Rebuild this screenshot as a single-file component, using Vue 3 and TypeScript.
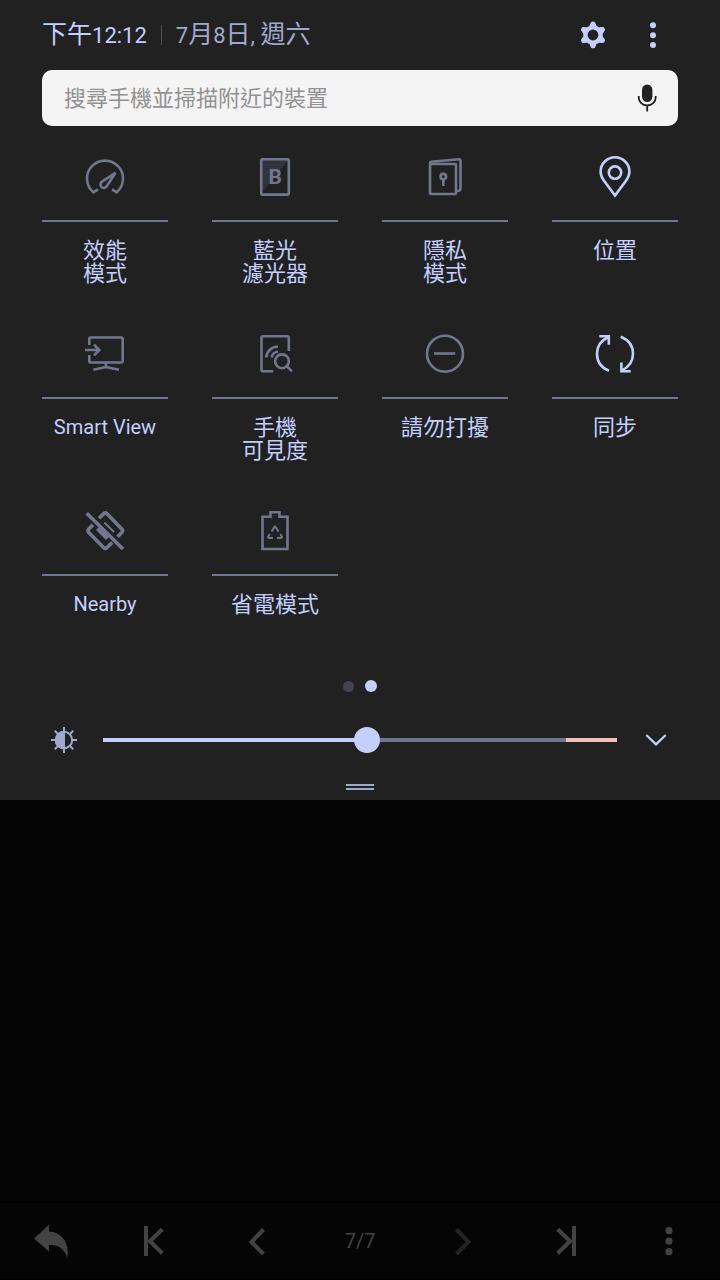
<script setup lang="ts">
import { computed, ref } from 'vue'

interface Tile {
  id: string
  lines: string[]
  on: boolean
  latin?: boolean
}

const tiles = ref<Tile[]>([
  { id: 'performance', lines: ['效能', '模式'], on: false },
  { id: 'bluelight', lines: ['藍光', '濾光器'], on: false },
  { id: 'secure', lines: ['隱私', '模式'], on: false },
  { id: 'location', lines: ['位置'], on: true },
  { id: 'smartview', lines: ['Smart View'], on: false, latin: true },
  { id: 'visibility', lines: ['手機', '可見度'], on: false },
  { id: 'dnd', lines: ['請勿打擾'], on: false },
  { id: 'sync', lines: ['同步'], on: true },
  { id: 'nearby', lines: ['Nearby'], on: false, latin: true },
  { id: 'battery', lines: ['省電模式'], on: false },
])

const maxBrightness = 255
const query = ref('')
const brightness = ref(131)
const trackStyle = computed(() => ({ '--fill': `${(brightness.value / maxBrightness) * 100}%` }))
</script>

<template>
  <div class="screen">
    <section class="panel">
      <header class="header">
        <time class="clock">下午<span class="num">12:12</span></time>
        <span class="divider"></span>
        <span class="date"><span class="num">7</span>月<span class="num">8</span>日<span class="num">, </span>週六</span>
        <div class="actions">
          <button type="button" class="action" aria-label="設定">
            <svg width="28" height="28" viewBox="0 0 28 28">
              <g fill="currentColor">
                <g v-for="a in [0, 60, 120, 180, 240, 300]" :key="a" :transform="`rotate(${a} 14 14)`">
                  <path d="M8.2 7.6Q10.6 6 11.3 2.8Q11.8 .6 14 .6T16.7 2.8Q17.4 6 19.8 7.6Z" />
                </g>
              </g>
              <circle cx="14" cy="14" r="7.6" fill="none" stroke="currentColor" stroke-width="4.4" />
            </svg>
          </button>
          <button type="button" class="action" aria-label="更多選項">
            <svg width="8" height="28" viewBox="0 0 8 28" fill="currentColor">
              <circle cx="4" cy="4.3" r="3" /><circle cx="4" cy="14.2" r="3" /><circle cx="4" cy="24" r="3" />
            </svg>
          </button>
        </div>
      </header>

      <form class="search" @submit.prevent>
        <input v-model="query" type="text" placeholder="搜尋手機並掃描附近的裝置" aria-label="搜尋手機並掃描附近的裝置" />
        <button type="button" class="mic" aria-label="語音搜尋">
          <svg width="20" height="28" viewBox="0 0 20 28">
            <rect x="5" y="0.5" width="10.4" height="17.5" rx="5.2" fill="currentColor" />
            <path d="M1.7 12v1.5a8.5 8 0 0 0 17 0V12M10.2 21.5V27.5" fill="none" stroke="currentColor" stroke-width="1.8" />
          </svg>
        </button>
      </form>

      <div class="tiles">
        <button v-for="tile in tiles" :key="tile.id" type="button" class="tile" :aria-pressed="tile.on" @click="tile.on = !tile.on">
          <svg class="glyph" :class="{ on: tile.on }" width="48" height="48" viewBox="0 0 48 48">
            <g v-if="tile.id === 'performance'">
              <path d="M17 36.3L12.3 39.3A18 18 0 1 1 35.7 39.3L31 36.3" />
              <path d="M34.5 19.8L21 28.7A3.4 3.4 0 1 0 26 32.8Z" />
            </g>
            <g v-else-if="tile.id === 'bluelight'">
              <path class="shade" d="M10 6H38L10 41Z" />
              <rect x="10.2" y="6.2" width="27.6" height="35.4" rx="1.5" />
              <text x="24.3" y="31" text-anchor="middle">B</text>
            </g>
            <g v-else-if="tile.id === 'secure'">
              <rect x="9" y="11" width="26" height="30" rx="1" />
              <path d="M9 11V10Q9 9 10.4 8.8L37.8 6.2Q39.5 6 39.5 7.6V35.5Q39.5 37.2 38 37.6L35 38" />
              <circle cx="22.3" cy="23.5" r="2.8" />
              <path d="M22.3 26.5V33" />
            </g>
            <g v-else-if="tile.id === 'location'">
              <path d="M24 42.5L13 27.7C10.8 24.6 9.6 22 9.6 18.7A14.4 14.4 0 0 1 38.4 18.7C38.4 22 37.2 24.6 35 27.7Z" />
              <circle cx="24" cy="19.6" r="6.2" />
            </g>
            <g v-else-if="tile.id === 'smartview'">
              <path d="M8.3 15V9Q8.3 7.5 9.8 7.5H40.2Q41.7 7.5 41.7 9V31Q41.7 32.5 40.2 32.5H9.8Q8.3 32.5 8.3 31V25" />
              <path d="M4 20H18M13 14.7L18.3 20L13 25.3M25 33V36.5M12.3 39.7L25 37L38 39.7" />
            </g>
            <g v-else-if="tile.id === 'visibility'">
              <path d="M22.3 41.2H12Q10.5 41.2 10.5 39.7V7.8Q10.5 6.3 12 6.3H36.3Q37.8 6.3 37.8 7.8V21" />
              <circle cx="31" cy="31.3" r="6.9" />
              <path d="M36 36.3L41 41.3M15.2 27.5A12 12 0 0 1 27 16.5M20.7 27.5A6.5 6.5 0 0 1 27 21.7" />
            </g>
            <g v-else-if="tile.id === 'dnd'">
              <circle cx="24" cy="23.7" r="18" /><path d="M13 23.5H34.2" />
            </g>
            <g v-else-if="tile.id === 'sync'">
              <path d="M18 40.7C10 37.5 6 31 6 23.7C6 17 10 10.5 17.5 7" />
              <path d="M8.3 6.2H17.8V14.8" />
              <path d="M29.7 6.8C37.8 10 42 16.5 42 23.7C42 30.5 38 37 30.5 40.6" />
              <path d="M39.7 41.2H30.4V32.5" />
            </g>
            <g v-else-if="tile.id === 'nearby'" class="thick">
              <path d="M18 11.2L22.8 6.6Q24.3 5.2 25.8 6.6L41 22.2Q42.3 23.7 41 25.2L36.5 29.7" />
              <path d="M11.9 17.7L7.6 22.2Q6.3 23.7 7.6 25.2L22.8 40.8Q24.3 42.2 25.8 40.8L31.2 35.5" />
              <path class="solid" d="M19.5 18.5L15 23L25 33L29.5 28.5Z" />
              <path d="M5.7 6.3L42 42" />
              <path class="thin" d="M23.3 15.5L33 25" />
            </g>
            <g v-else>
              <path d="M19.5 9.8V5.3H28.5V9.8H36.5V42H11.5V9.8Z" />
              <path class="thin" d="M20.6 24.6L23.2 20.2Q24 19 24.8 20.2L27.4 24.6M29.2 27L30.8 29.6Q31.2 31 29.8 31H26M22 31H18.2Q16.8 31 17.2 29.6L18.8 27" />
            </g>
          </svg>
          <span class="label" :class="{ latin: tile.latin }"><span v-for="line in tile.lines" :key="line">{{ line }}</span></span>
        </button>
      </div>

      <div class="pages"><span class="page"></span><span class="page current"></span></div>

      <div class="brightness">
        <button type="button" class="auto" aria-label="自動亮度">
          <svg width="28" height="28" viewBox="0 0 28 28" fill="none" stroke="currentColor" stroke-width="2">
            <circle cx="14" cy="14" r="8.2" />
            <path d="M14 5.8A8.2 8.2 0 0 0 14 22.2Z" fill="currentColor" />
            <path d="M14 1V6M14 22V27M1 14H6M22 14H27M4.8 4.8L8.5 8.5M19.5 19.5L23.2 23.2M4.8 23.2L8.5 19.5M19.5 8.5L23.2 4.8" />
          </svg>
        </button>
        <input v-model.number="brightness" class="slider" type="range" min="0" :max="maxBrightness" aria-label="亮度" :style="trackStyle" />
        <button type="button" class="expand" aria-label="展開">
          <svg width="22" height="12" viewBox="0 0 22 12" fill="none" stroke="currentColor" stroke-width="2.2">
            <path d="M1.3 1L11 10.4L20.7 1" />
          </svg>
        </button>
      </div>

      <div class="handle"></div>
    </section>

    <main class="content"></main>

    <nav class="toolbar">
      <button type="button" aria-label="返回">
        <svg width="36" height="34" viewBox="0 0 36 34" fill="currentColor">
          <path d="M1 14.5L16 .8V7.5C29 8 37 20 34.2 33.5C31 24 25 20.5 16 21V27.5Z" />
        </svg>
      </button>
      <button type="button" aria-label="第一頁">
        <svg width="20" height="30" viewBox="0 0 20 30">
          <path d="M2 0V30M18.3 3.3L6 15.3L18.3 27.3" />
        </svg>
      </button>
      <button type="button" aria-label="上一頁">
        <svg width="18" height="28" viewBox="0 0 18 28"><path d="M15.5 2.5L3.5 15L15.5 27" /></svg>
      </button>
      <span class="counter">7/7</span>
      <button type="button" class="faded" aria-label="下一頁">
        <svg width="18" height="28" viewBox="0 0 18 28"><path d="M2.5 2.5L14.5 15L2.5 27" /></svg>
      </button>
      <button type="button" aria-label="最後一頁">
        <svg width="20" height="30" viewBox="0 0 20 30">
          <path d="M18 0V30M1.7 3.3L14 15.3L1.7 27.3" />
        </svg>
      </button>
      <button type="button" aria-label="更多">
        <svg width="8" height="30" viewBox="0 0 8 30" fill="currentColor">
          <circle cx="4" cy="4.6" r="3.6" /><circle cx="4" cy="15.2" r="3.6" /><circle cx="4" cy="25.7" r="3.6" />
        </svg>
      </button>
    </nav>
  </div>
</template>

<style>
body {
  background: #050505;
}
</style>

<style scoped>
.screen {
  display: flex;
  flex-direction: column;
  min-height: 100vh;
  background: #050505;
  color: #c4cfff;
  font-family: Roboto, "Noto Sans CJK TC", sans-serif;
  font-weight: 400;
}

button {
  display: flex;
  align-items: center;
  justify-content: center;
  padding: 0;
  border: 0;
  background: none;
  color: inherit;
  font: inherit;
}

.panel {
  padding: 0 42px 10px;
  background: #212121;
}

.header {
  display: flex;
  align-items: center;
  height: 70px;
  font-size: 25px;
  line-height: 30px;
  white-space: nowrap;
}

.num {
  font-size: 22px;
}

.divider {
  width: 1px;
  height: 20px;
  margin: 0 14px;
  background: #50535f;
}

.date {
  color: #a0a8cf;
}

.actions {
  display: flex;
  gap: 10px;
  margin-left: auto;
}

.action {
  width: 50px;
  height: 50px;
}

.search {
  display: flex;
  align-items: center;
  height: 56px;
  border-radius: 10px;
  background: #f4f4f4;
}

.search input {
  flex: 1;
  min-width: 0;
  height: 100%;
  padding: 0 0 0 22px;
  border: 0;
  outline: 0;
  background: none;
  color: #212121;
  font-family: inherit;
  font-size: 22px;
}

.search input::placeholder {
  color: #929292;
  opacity: 1;
}

.mic {
  width: 62px;
  height: 100%;
  color: #212121;
}

.tiles {
  display: grid;
  grid-template-columns: repeat(4, 1fr);
  grid-auto-rows: 133px;
  gap: 44px;
  padding-top: 27px;
}

.tile {
  flex-direction: column;
  justify-content: flex-start;
}

.glyph {
  margin-bottom: 19px;
  color: #72778f;
  fill: none;
  stroke: currentColor;
  stroke-width: 2.6;
}

.glyph.on {
  color: #c4cfff;
}

.glyph text {
  fill: currentColor;
  stroke: none;
  font-size: 21px;
  font-weight: 700;
}

.glyph .shade {
  fill: #32333b;
  stroke: none;
}

.glyph .thick {
  stroke-width: 3.6;
}

.glyph .thin {
  stroke-width: 2;
}

.glyph .solid {
  fill: currentColor;
  stroke: none;
}

.label {
  display: flex;
  flex-direction: column;
  align-self: stretch;
  padding-top: 17px;
  border-top: 2px solid #72778f;
  font-size: 22px;
  line-height: 23px;
  text-align: center;
}

.label.latin {
  font-size: 20px;
}

.pages {
  display: flex;
  align-items: center;
  justify-content: center;
  gap: 11px;
  height: 12px;
  margin-top: 40px;
}

.page {
  width: 11px;
  height: 11px;
  border-radius: 50%;
  background: #43444f;
}

.page.current {
  width: 12px;
  height: 12px;
  background: #c4cfff;
}

.brightness {
  display: flex;
  align-items: center;
  gap: 17px;
  height: 44px;
  margin-top: 26px;
}

.auto,
.expand {
  flex: none;
  width: 44px;
  height: 44px;
}

.auto {
  color: #a0a8cf;
}

.slider {
  flex: 1;
  min-width: 0;
  height: 26px;
  margin: 0;
  appearance: none;
  background: none;
}

.slider::-webkit-slider-runnable-track {
  height: 4px;
  background: linear-gradient(to right, #c4cfff var(--fill), #72778f var(--fill) 90%, #f2c0bb 90%);
}

.slider::-webkit-slider-thumb {
  appearance: none;
  width: 26px;
  height: 26px;
  margin-top: -11px;
  border-radius: 50%;
  background: #c4cfff;
}

.handle {
  width: 28px;
  height: 2px;
  margin: 22px auto 0;
  border-top: 2px solid #a0a8cf;
  border-bottom: 2px solid #a0a8cf;
}

.content {
  flex: 1;
}

.toolbar {
  display: flex;
  align-items: center;
  height: 76px;
  border-top: 2px solid #000;
  border-bottom: 1px solid #000;
  color: #434343;
  font-size: 20px;
}

.toolbar > * {
  flex: 1;
  height: 100%;
}

.toolbar svg:not([fill]) path {
  fill: none;
  stroke: currentColor;
  stroke-width: 4;
}

.toolbar .counter {
  line-height: 76px;
  text-align: center;
}

.toolbar .faded {
  color: #242424;
}
</style>
